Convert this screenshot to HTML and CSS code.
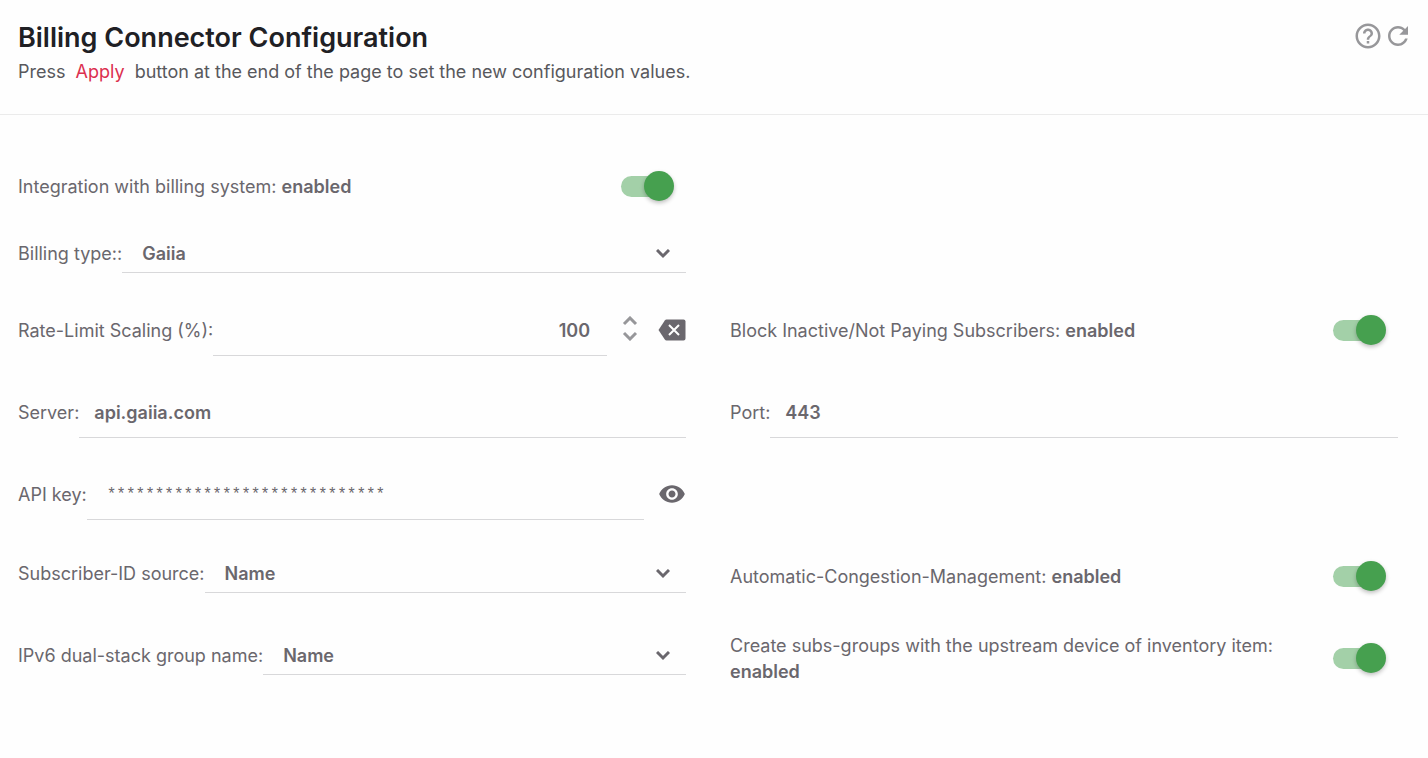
FILE: index.html
```html
<!DOCTYPE html>
<html lang="en">
<head>
    <meta charset="UTF-8">
    <meta name="viewport" content="width=device-width, initial-scale=1.0">
    <title>Billing Connector Configuration</title>
    <link rel="stylesheet" href="styles.css">
</head>
<body>
    <header class="page-header">
        <div>
            <h1>Billing Connector Configuration</h1>
            <p>Press <span class="apply">Apply</span> button at the end of the page to set the new configuration values.</p>
        </div>
        <div class="header-actions">
            <button type="button" class="icon-button" aria-label="Help">
                <svg width="30" height="30" viewBox="0 0 24 24"><path d="M11 18h2v-2h-2v2zm1-16C6.480 2 2 6.480 2 12s4.480 10 10 10 10-4.480 10-10S17.520 2 12 2zm0 18c-4.410 0-8-3.590-8-8s3.590-8 8-8 8 3.590 8 8-3.590 8-8 8zm0-14c-2.210 0-4 1.790-4 4h2c0-1.100.9-2 2-2s2 .9 2 2c0 2-3 1.750-3 5h2c0-2.250 3-2.500 3-5 0-2.210-1.790-4-4-4z"/></svg>
            </button>
            <button type="button" class="icon-button" aria-label="Reload">
                <svg width="30" height="30" viewBox="0 0 24 24"><path d="M17.650 6.350C16.200 4.900 14.210 4 12 4c-4.420 0-7.990 3.580-7.990 8s3.570 8 7.990 8c3.730 0 6.840-2.550 7.730-6h-2.080c-.82 2.330-3.040 4-5.650 4-3.310 0-6-2.690-6-6s2.690-6 6-6c1.660 0 3.140.69 4.220 1.780L13 11h7V4l-2.350 2.350z"/></svg>
            </button>
        </div>
    </header>

    <form class="settings">
        <div class="row">
            <label for="integration">Integration with billing system: <b>enabled</b></label>
            <input type="checkbox" class="toggle" id="integration" checked>
        </div>

        <div class="row select-row left">
            <label for="billingType">Billing type::</label>
            <select class="field" id="billingType">
                <option>Gaiia</option>
            </select>
            <svg class="chevron" width="14" height="10" viewBox="0 0 14 10"><path d="M1 1l6 6 6-6"/></svg>
        </div>

        <div class="row left">
            <label for="rateLimit">Rate-Limit Scaling (%):</label>
            <input type="text" inputmode="numeric" class="field number" id="rateLimit" value="100">
            <div class="spinner">
                <button type="button" aria-label="Increase"><svg width="16" height="10" viewBox="0 0 16 10"><path d="M2 8l6-6 6 6"/></svg></button>
                <button type="button" aria-label="Decrease"><svg width="16" height="10" viewBox="0 0 16 10"><path d="M2 2l6 6 6-6"/></svg></button>
            </div>
            <button type="button" class="icon-button dark clear" aria-label="Clear">
                <svg width="28" height="22" viewBox="0 0 28 22"><path d="M8.500.5H25.500a2 2 0 0 1 2 2v17a2 2 0 0 1-2 2H8.500q-1 0-1.700-1L.5 11l6.300-9.500q.7-1 1.700-1z"/><path class="cross" d="M11 6l10 10M21 6L11 16"/></svg>
            </button>
        </div>
        <div class="row">
            <label for="blockInactive">Block Inactive/Not Paying Subscribers: <b>enabled</b></label>
            <input type="checkbox" class="toggle" id="blockInactive" checked>
        </div>

        <div class="row">
            <label for="server">Server:</label>
            <input type="text" class="field" id="server" value="api.gaiia.com">
        </div>
        <div class="row">
            <label for="port">Port:</label>
            <input type="text" class="field" id="port" value="443">
        </div>

        <div class="row left">
            <label for="apiKey">API key:</label>
            <input type="text" class="field masked" id="apiKey" value="*****************************">
            <button type="button" class="icon-button dark clear" aria-label="Show API key">
                <svg width="28" height="28" viewBox="0 0 24 24"><path d="M12 4.500C7 4.500 2.730 7.610 1 12c1.730 4.390 6 7.500 11 7.500s9.270-3.110 11-7.500c-1.730-4.390-6-7.500-11-7.500zM12 17c-2.760 0-5-2.240-5-5s2.240-5 5-5 5 2.240 5 5-2.240 5-5 5zm0-8c-1.660 0-3 1.340-3 3s1.340 3 3 3 3-1.340 3-3-1.340-3-3-3z"/></svg>
            </button>
        </div>

        <div class="row select-row left">
            <label for="subscriberId">Subscriber-ID source:</label>
            <select class="field" id="subscriberId">
                <option>Name</option>
            </select>
            <svg class="chevron" width="14" height="10" viewBox="0 0 14 10"><path d="M1 1l6 6 6-6"/></svg>
        </div>
        <div class="row">
            <label for="congestion">Automatic-Congestion-Management: <b>enabled</b></label>
            <input type="checkbox" class="toggle" id="congestion" checked>
        </div>

        <div class="row select-row left">
            <label for="ipv6Group">IPv6 dual-stack group name:</label>
            <select class="field" id="ipv6Group">
                <option>Name</option>
            </select>
            <svg class="chevron" width="14" height="10" viewBox="0 0 14 10"><path d="M1 1l6 6 6-6"/></svg>
        </div>
        <div class="row">
            <label for="subsGroups">Create subs-groups with the upstream device of inventory item: <b>enabled</b></label>
            <input type="checkbox" class="toggle" id="subsGroups" checked>
        </div>
    </form>
</body>
</html>
```
FILE: styles.css
```css
* {
    box-sizing: border-box;
}
body {
    margin: 0;
    background-color: #fefefe;
    color: #6a676d;
    font-family: Inter, "Liberation Sans", sans-serif;
    font-size: 18px;
    line-height: 26px;
}
.page-header {
    display: flex;
    justify-content: space-between;
    align-items: flex-start;
    padding: 20px 15px 29px 18px;
    border-bottom: 1px solid #ebebeb;
}
h1 {
    margin: 0;
    font-size: 27px;
    line-height: 36px;
    font-weight: 600;
    color: #202024;
}
p {
    margin: 3px 0 0;
    color: #58585c;
}
.apply {
    margin: 0 5px;
    color: #dc304f;
}
.header-actions {
    display: flex;
    padding-top: 1px;
}
button {
    display: flex;
    padding: 0;
    background: none;
    border: none;
    cursor: pointer;
}
.icon-button {
    fill: #97979a;
}
.icon-button.dark {
    fill: #6a676d;
}
.clear {
    padding-bottom: 3px;
}
.cross {
    stroke: #fefefe;
    stroke-width: 2;
}
.settings {
    display: grid;
    grid-template-columns: 1fr 1fr;
    grid-template-rows: 74px 66px;
    grid-auto-rows: 82px;
    column-gap: 44px;
    padding: 35px 30px 40px 18px;
}
.row {
    display: flex;
    align-items: center;
}
.left,
.row:first-child {
    grid-column: 1;
}
b {
    font-weight: 600;
}
.field {
    flex: 1;
    min-width: 0;
    height: 50px;
    padding: 0 15px;
    border: none;
    border-bottom: 1px solid #d8d8da;
    border-radius: 0;
    outline: none;
    background: none;
    color: inherit;
    font: inherit;
    font-weight: 600;
}
.number {
    padding-right: 17px;
    text-align: right;
}
.masked {
    margin-right: 14px;
    padding-left: 20px;
    font-family: "Liberation Mono", monospace;
    font-size: 16px;
    font-weight: 400;
}
.select-row {
    padding-bottom: 6px;
}
select.field {
    height: 38px;
    padding: 0 30px 0 20px;
    appearance: none;
}
.chevron {
    margin: 0 16px 0 -30px;
    pointer-events: none;
    fill: none;
    stroke: #6a676d;
    stroke-width: 3;
}
.spinner {
    display: flex;
    flex-direction: column;
    gap: 5px;
    margin: 0 20px 5px 15px;
    fill: none;
    stroke: #97979a;
    stroke-width: 3;
}

/* toggle switch */
.toggle {
    appearance: none;
    flex: none;
    display: flex;
    align-items: center;
    width: 53px;
    height: 30px;
    margin: 0 12px 2px auto;
    cursor: pointer;
}
.toggle::before {
    content: "";
    width: 46px;
    height: 21px;
    border-radius: 11px;
    background-color: #a3d0a8;
}
.toggle::after {
    content: "";
    width: 30px;
    height: 30px;
    margin-left: -23px;
    border-radius: 50%;
    background-color: #46a04f;
    box-shadow: 0 2px 4px rgba(0, 0, 0, 0.25);
}
```
